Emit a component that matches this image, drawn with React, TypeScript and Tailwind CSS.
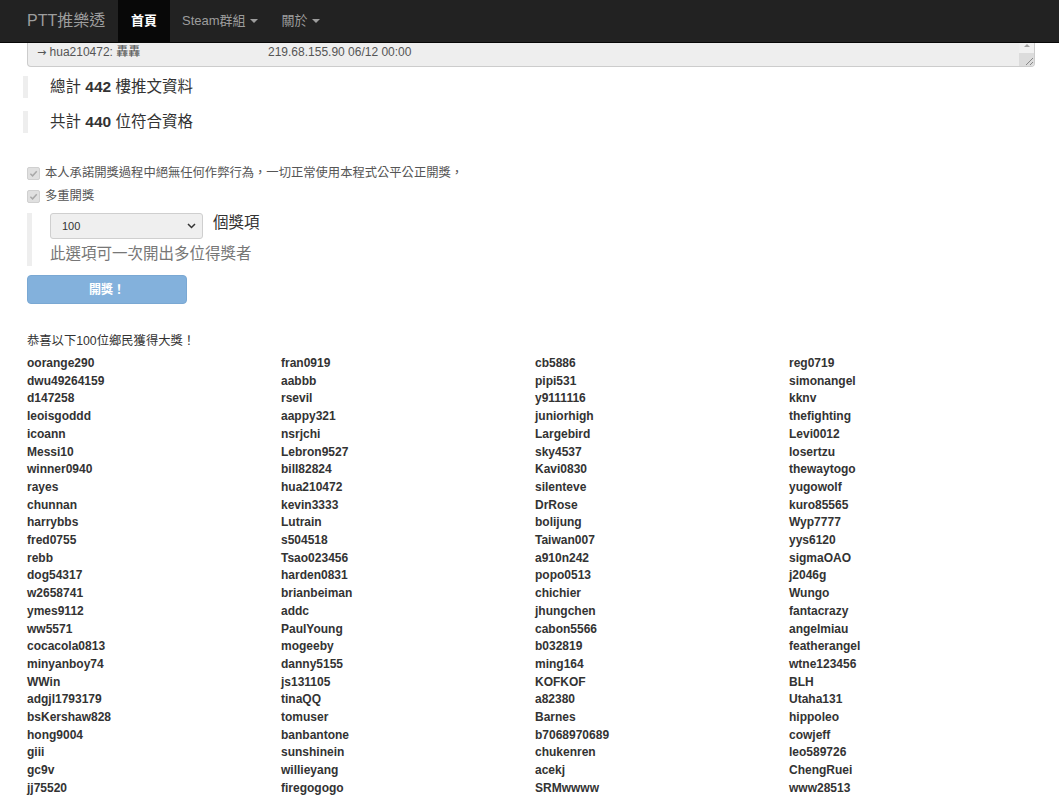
import React from "react";

const col1 = ["oorange290","dwu49264159","d147258","leoisgoddd","icoann","Messi10","winner0940","rayes","chunnan","harrybbs","fred0755","rebb","dog54317","w2658741","ymes9112","ww5571","cocacola0813","minyanboy74","WWin","adgjl1793179","bsKershaw828","hong9004","giii","gc9v","jj75520"];
const col2 = ["fran0919","aabbb","rsevil","aappy321","nsrjchi","Lebron9527","bill82824","hua210472","kevin3333","Lutrain","s504518","Tsao023456","harden0831","brianbeiman","addc","PaulYoung","mogeeby","danny5155","js131105","tinaQQ","tomuser","banbantone","sunshinein","willieyang","firegogogo"];
const col3 = ["cb5886","pipi531","y9111116","juniorhigh","Largebird","sky4537","Kavi0830","silenteve","DrRose","bolijung","Taiwan007","a910n242","popo0513","chichier","jhungchen","cabon5566","b032819","ming164","KOFKOF","a82380","Barnes","b7068970689","chukenren","acekj","SRMwwww"];
const col4 = ["reg0719","simonangel","kknv","thefighting","Levi0012","losertzu","thewaytogo","yugowolf","kuro85565","Wyp7777","yys6120","sigmaOAO","j2046g","Wungo","fantacrazy","angelmiau","featherangel","wtne123456","BLH","Utaha131","hippoleo","cowjeff","leo589726","ChengRuei","www28513"];

const Caret = () => (
  <span className="inline-block ml-[4px] align-middle w-0 h-0 border-l-[4px] border-r-[4px] border-t-[4px] border-l-transparent border-r-transparent border-t-[#9d9d9d]" />
);

const Check = () => (
  <span className="w-[13px] h-[13px] rounded-[2px] bg-[#e0e0e0] border border-[#d0d0d0] flex items-center justify-center">
    <svg width="9" height="9" viewBox="0 0 10 10">
      <path d="M1.5 5.2 L4 7.6 L8.6 2.4" fill="none" stroke="#a8a8a8" strokeWidth="1.6" />
    </svg>
  </span>
);

export default function App() {
  const rows = col1.map((_, i) => [col1[i], col2[i], col3[i], col4[i]]);
  return (
    <div className="w-[1059px] h-[800px] overflow-hidden bg-white text-[#333] font-['Liberation_Sans','Noto_Sans_CJK_TC',sans-serif]">
      {/* navbar */}
      <div className="h-[43px] bg-[#222] border-b border-[#080808] flex items-stretch">
        <div className="ml-[27px] w-[91px] flex items-center text-[16px] text-[#9d9d9d]">PTT推樂透</div>
        <div className="bg-[#080808] px-[13px] flex items-center text-[13px] font-bold text-white">首頁</div>
        <div className="px-[12px] flex items-center text-[13px] text-[#9d9d9d]">Steam群組<Caret /></div>
        <div className="px-[12px] flex items-center text-[13px] text-[#9d9d9d]">關於<Caret /></div>
      </div>

      <div className="px-[27px]">
        {/* textarea remnant */}
        <div className="w-[1008px] h-[24px] bg-[#eeeeee] border-x border-b border-[#cccccc] rounded-b-[4px] flex relative overflow-hidden">
          <div className="flex-1 pl-[9px] text-[12px] leading-[18px] text-[#555] flex">
            <span className="w-[231px]"><span className="font-['DejaVu_Sans',sans-serif] text-[11px]">→</span> hua210472: 轟轟</span>
            <span>219.68.155.90 06/12 00:00</span>
          </div>
          <div className="w-[15px] flex flex-col bg-[#f1f1f1]">
            <div className="flex-1 flex justify-center">
              <span className="w-0 h-0 border-l-[3px] border-r-[3px] border-b-[3px] border-l-transparent border-r-transparent border-b-[#a3a3a3] mt-[1px]" />
            </div>
            <div className="h-[13px] bg-[#dcdcdc] flex items-end justify-end">
              <svg width="10" height="10" viewBox="0 0 10 10">
                <path d="M9 2 L2 9 M9 6 L6 9" stroke="#888" strokeWidth="1" />
              </svg>
            </div>
          </div>
        </div>

        {/* blockquotes */}
        <div className="mt-[9px] -ml-[4px] border-l-[5px] border-[#eeeeee] pl-[22px] h-[22px] leading-[22px] text-[15.5px] text-[#333]">
          總計 <b>442</b> 樓推文資料
        </div>
        <div className="mt-[13px] -ml-[4px] border-l-[5px] border-[#eeeeee] pl-[22px] h-[22px] leading-[22px] text-[15.5px] text-[#333]">
          共計 <b>440</b> 位符合資格
        </div>

        {/* checkboxes */}
        <div className="mt-[32px] h-[17px] flex items-center gap-[5px] text-[12.3px] text-[#555]">
          <Check />
          <span>本人承諾開獎過程中絕無任何作弊行為，一切正常使用本程式公平公正開獎，</span>
        </div>
        <div className="mt-[6px] h-[17px] flex items-center gap-[5px] text-[12.3px] text-[#555]">
          <Check />
          <span>多重開獎</span>
        </div>

        {/* option blockquote */}
        <div className="mt-[8px] border-l-[5px] border-[#eeeeee] pl-[18px] h-[53px]">
          <div className="flex items-start">
            <div className="w-[153px] h-[26px] bg-[#efefef] border border-[#cfcfcf] rounded-[3px] flex items-center justify-between pl-[11px] pr-[6px] text-[11px] text-[#333]">
              <span>100</span>
              <svg width="9" height="6" viewBox="0 0 9 6">
                <path d="M1 1 L4.5 4.5 L8 1" fill="none" stroke="#333" strokeWidth="1.5" />
              </svg>
            </div>
            <span className="ml-[10px] text-[15.5px] leading-[19px] text-[#333]">個獎項</span>
          </div>
          <div className="mt-[4px] text-[15.5px] leading-[22px] text-[#777]">此選項可一次開出多位得獎者</div>
        </div>

        {/* button */}
        <div className="mt-[9px] w-[160px] h-[29px] rounded-[4px] bg-[#83b1dc] border border-[#7aa8d3] flex items-center justify-center text-[12px] font-bold text-white">
          開獎！
        </div>

        {/* results */}
        <div className="mt-[29px] text-[12.3px] leading-[17px] text-[#333]">恭喜以下100位鄉民獲得大獎！</div>
        <div className="mt-[5px] w-[1016px] grid grid-cols-4 text-[12px] font-bold leading-[17.7px] text-[#333]">
          {rows.map((r, i) => (
            <React.Fragment key={i}>
              {r.map((n, j) => (
                <div key={j}>{n}</div>
              ))}
            </React.Fragment>
          ))}
        </div>
      </div>
    </div>
  );
}
